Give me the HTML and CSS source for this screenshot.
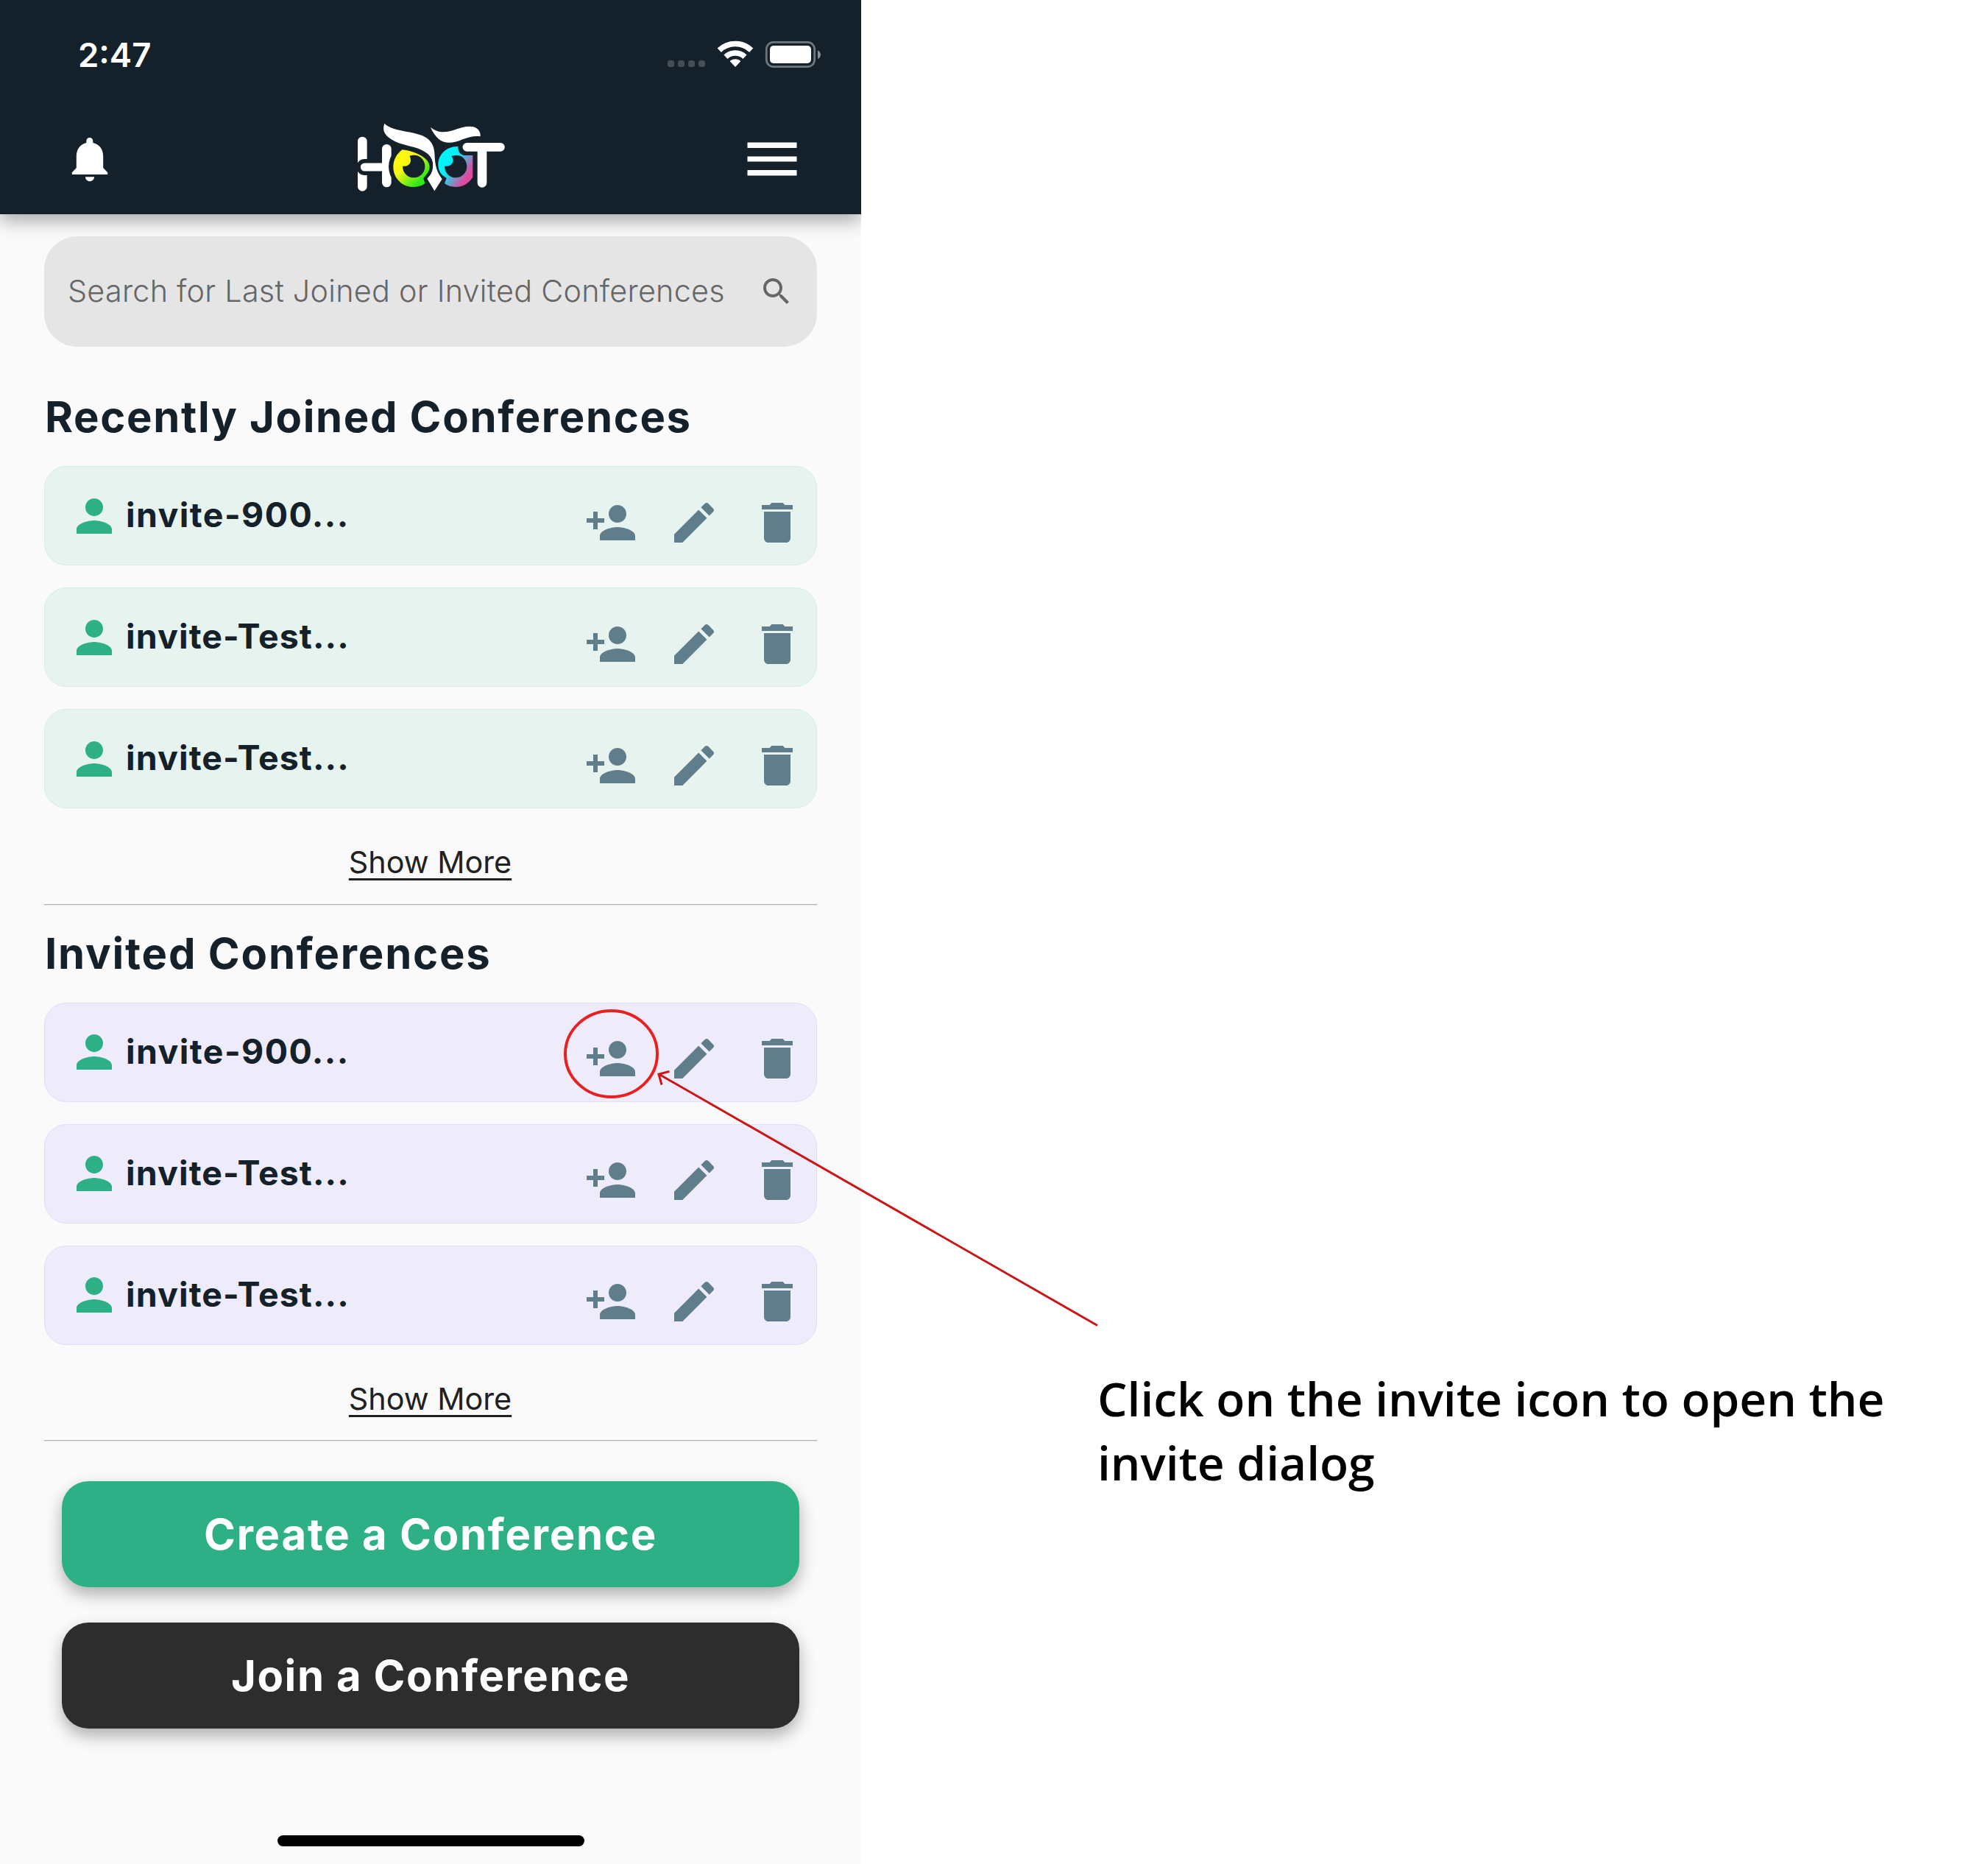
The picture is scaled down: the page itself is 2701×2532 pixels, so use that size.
FILE: index.html
```html
<!DOCTYPE html>
<html lang="en">
<head>
<meta charset="utf-8">
<title>Hoot</title>
<link rel="stylesheet" href="styles.css">
</head>
<body>
<svg class="sprite" aria-hidden="true">
  <symbol id="person" viewBox="0 0 24 24"><path d="M12 12c2.21 0 4-1.79 4-4s-1.79-4-4-4-4 1.79-4 4 1.79 4 4 4zm0 2c-2.67 0-8 1.34-8 4v2h16v-2c0-2.66-5.33-4-8-4z"/></symbol>
  <symbol id="person-add" viewBox="0 0 24 24"><path d="M15 12c2.21 0 4-1.79 4-4s-1.79-4-4-4-4 1.79-4 4 1.79 4 4 4zm-9-2V7H4v3H1v2h3v3h2v-3h3v-2H6zm9 4c-2.67 0-8 1.34-8 4v2h16v-2c0-2.66-5.33-4-8-4z"/></symbol>
  <symbol id="edit" viewBox="0 0 24 24"><path d="M3 17.25V21h3.75L17.81 9.94l-3.75-3.75L3 17.25zM20.71 7.04c.39-.39.39-1.02 0-1.41l-2.34-2.34c-.39-.39-1.02-.39-1.41 0l-1.83 1.83 3.75 3.75 1.83-1.83z"/></symbol>
  <symbol id="delete" viewBox="0 0 24 24"><path d="M6 19c0 1.1.9 2 2 2h8c1.1 0 2-.9 2-2V7H6v12zM19 4h-3.5l-1-1h-5l-1 1H5v2h14V4z"/></symbol>
</svg>

<div class="page">
  <main class="phone">
    <header class="header">
      <div class="status">
        <span class="time">2:47</span>
        <svg class="status-icons" viewBox="907 55 209 37">
          <g fill="#434e55">
            <rect x="907" y="82" width="9" height="9" rx="3"/><rect x="921" y="82" width="9" height="9" rx="3"/>
            <rect x="935" y="82" width="9" height="9" rx="3"/><rect x="949" y="82" width="9" height="9" rx="3"/>
          </g>
          <g fill="none" stroke="#fff" stroke-width="7.6">
            <path d="M977.3 68.2A31.5 31.5 0 0 1 1020.7 68.2"/>
            <path d="M986 77.2A19 19 0 0 1 1012 77.2"/>
          </g>
          <path fill="#fff" d="M999 91l-6.8-7.2c-.5-.6-.4-1 .1-1.4 4-2.9 9.4-2.9 13.4 0 .5.4.6.8.1 1.4z"/>
          <rect x="1041.3" y="57.3" width="65.4" height="33.4" rx="9.5" fill="none" stroke="#6f787d" stroke-width="2.7"/>
          <rect x="1046" y="62" width="56" height="24" rx="5" fill="#fff"/>
          <path fill="#8a9195" d="M1111 68.5c5.3 2 5.3 9.5 0 11.5z"/>
        </svg>
      </div>
      <nav class="nav">
        <svg class="bell" viewBox="97 186 50 61" fill="#fff">
          <path d="M121.8 187c2.6 0 4.5 2 4.5 4.6v2.3c9.2 2 13.9 9 13.9 18.6V228l6 6.2V237H97.8v-2.8l6-6.2v-15.5c0-9.6 4.7-16.6 13.5-18.6v-2.3c0-2.6 1.9-4.6 4.5-4.6z"/>
          <path d="M116 240.2h12c0 3.5-2.7 6-6 6s-6-2.5-6-6z"/>
        </svg>
        <svg class="logo" viewBox="0 0 750 390" role="img" aria-label="Hoot">
          <defs>
            <linearGradient id="eye-left" gradientUnits="userSpaceOnUse" x1="247" y1="215" x2="325" y2="295"><stop offset="0" stop-color="#fff80f"/><stop offset=".25" stop-color="#f4f611"/><stop offset="1" stop-color="#2fe91a"/></linearGradient>
            <linearGradient id="eye-right" gradientUnits="userSpaceOnUse" x1="430" y1="215" x2="520" y2="275"><stop offset="0" stop-color="#00f3f8"/><stop offset=".25" stop-color="#0be9f2"/><stop offset="1" stop-color="#e0489f"/></linearGradient>
          </defs>
          <g stroke-linecap="round" stroke-width="38">
            <path stroke="#fff" d="M97 126V310"/>
            <path stroke="#15212a" stroke-width="66" d="M106 231H150"/>
            <path stroke="#fff" stroke-width="33" d="M106 231H190"/>
            <path stroke="#fff" d="M196 157V294"/>
          </g>
          <circle cx="297" cy="229" r="93" fill="#15212a"/>
          <path fill="url(#eye-left)" d="M260 160C310 166 371 192 371 230C371 250 357 262 346 277L352 298C338 308 322 312 305 312C258 312 223 275 223 230C223 200 238 176 260 160Z"/>
          <path fill="#15212a" d="M289 185C328 174 352 200 352 228C352 255 332 274 307 274C282 274 261 255 261 227C280 230 294 219 294 204C294 196 292 190 289 185Z"/>
          <path fill="url(#eye-right)" d="M487 147C486 168 497 183 515 183L547 183L547 272C530 298 505 312 477 312C460 312 445 307 432 298L440 276C415 262 406 245 406 220C406 180 440 145 487 147Z"/>
          <path fill="#15212a" d="M460 187C499 172 523 200 523 228C523 255 502 274 478 274C453 274 432 255 432 227C452 230 467 218 467 204C467 197 464 191 460 187Z"/>
          <path fill="#fff" d="M187 53C220 86 290 82 340 102C382 120 392 150 392 190C394 225 400 250 422 280L391 328L361 278C380 258 386 245 384 212C378 180 350 165 318 153C285 143 245 138 215 118C185 100 178 78 187 53Z"/>
          <path fill="#fff" d="M375 68C400 90 430 92 465 82C500 68 530 62 550 67C572 75 579 88 578 106C555 102 530 109 505 118C470 135 430 138 406 115C395 103 382 88 375 68Z"/>
          <path fill="none" stroke="#fff" stroke-linecap="round" stroke-width="35" d="M523 149.5H660"/>
          <path fill="none" stroke="#fff" stroke-linecap="round" stroke-width="38" d="M585 160V295"/>
        </svg>
        <svg class="menu" viewBox="0 0 68 46" fill="#fff"><path d="M.5.5h67V8H.5zM.5 19.400h67v7.200H.5zM.5 38h67v7.500H.5z"/></svg>
      </nav>
    </header>

    <div class="content">
      <div class="search">
        <span class="placeholder">Search for Last Joined or Invited Conferences</span>
        <svg class="search-icon" viewBox="0 0 24 24"><path d="M15.5 14h-.79l-.28-.27C15.41 12.59 16 11.11 16 9.5 16 5.91 13.09 3 9.5 3S3 5.91 3 9.5 5.91 16 9.5 16c1.61 0 3.09-.59 4.23-1.57l.27.28v.79l5 4.99L20.49 19l-4.99-5zm-6 0C7.01 14 5 11.99 5 9.5S7.01 5 9.5 5 14 7.01 14 9.5 11.99 14 9.5 14z"/></svg>
      </div>

      <section class="section">
        <h2>Recently Joined Conferences</h2>
        <ul class="list">
          <li class="card"><svg class="icon user"><use href="#person"/></svg><span class="name">invite-900...</span><svg class="icon invite"><use href="#person-add"/></svg><svg class="icon"><use href="#edit"/></svg><svg class="icon"><use href="#delete"/></svg></li>
          <li class="card"><svg class="icon user"><use href="#person"/></svg><span class="name">invite-Test...</span><svg class="icon invite"><use href="#person-add"/></svg><svg class="icon"><use href="#edit"/></svg><svg class="icon"><use href="#delete"/></svg></li>
          <li class="card"><svg class="icon user"><use href="#person"/></svg><span class="name">invite-Test...</span><svg class="icon invite"><use href="#person-add"/></svg><svg class="icon"><use href="#edit"/></svg><svg class="icon"><use href="#delete"/></svg></li>
        </ul>
        <a class="more">Show More</a>
      </section>

      <section class="section invited">
        <h2>Invited Conferences</h2>
        <ul class="list">
          <li class="card"><svg class="icon user"><use href="#person"/></svg><span class="name">invite-900...</span><svg class="icon invite"><use href="#person-add"/></svg><svg class="icon"><use href="#edit"/></svg><svg class="icon"><use href="#delete"/></svg></li>
          <li class="card"><svg class="icon user"><use href="#person"/></svg><span class="name">invite-Test...</span><svg class="icon invite"><use href="#person-add"/></svg><svg class="icon"><use href="#edit"/></svg><svg class="icon"><use href="#delete"/></svg></li>
          <li class="card"><svg class="icon user"><use href="#person"/></svg><span class="name">invite-Test...</span><svg class="icon invite"><use href="#person-add"/></svg><svg class="icon"><use href="#edit"/></svg><svg class="icon"><use href="#delete"/></svg></li>
        </ul>
        <a class="more">Show More</a>
      </section>

      <div class="buttons">
        <button class="button create">Create a Conference</button>
        <button class="button join">Join a Conference</button>
      </div>
    </div>
    <div class="home-bar"></div>
  </main>

  <aside class="note">
    <p>Click on the invite icon to open the invite dialog</p>
  </aside>

  <svg class="callout" viewBox="760 1360 740 450" fill="none" aria-hidden="true">
    <ellipse cx="830.5" cy="1431.5" rx="62.5" ry="58.5" stroke="#e82020" stroke-width="4"/>
    <path stroke="#cb1517" stroke-width="3" d="M1491 1800.500L895 1459M909.500 1455.500L895 1459L899 1473.500"/>
  </svg>
</div>
</body>
</html>
```
FILE: styles.css
```css
* { box-sizing: border-box; }

body {
  margin: 0;
  background: #fff;
  font-family: Inter, "Liberation Sans", sans-serif;
}

.sprite { display: none; }
svg { display: block; flex: none; }

.page {
  position: relative;
  display: flex;
  width: 2701px;
  height: 2532px;
  overflow: hidden;
}

/* Phone screen */
.phone {
  display: flex;
  flex-direction: column;
  flex: none;
  width: 1170px;
  height: 2532px;
  overflow: hidden;
  background: #fafafa;
}

.header {
  flex: none;
  height: 291px;
  background: #15212a;
  box-shadow: 0 10px 22px rgba(0, 0, 0, .3);
}

.status {
  display: flex;
  align-items: center;
  justify-content: space-between;
  height: 147px;
  padding: 0 54px 0 106px;
}

.time {
  margin-top: 2px;
  color: #fff;
  font-size: 45.5px;
  font-weight: 600;
  line-height: 54px;
}

.status-icons { width: 209px; height: 37px; }

.nav {
  display: grid;
  grid-template-columns: 1fr 250px 1fr;
  align-items: center;
  height: 136px;
}

.bell { width: 50px; height: 61px; margin: 3px 0 0 97px; }
.logo { width: 250px; height: 130px; }
.menu { width: 68px; height: 46px; margin: 2px 87px 0 0; justify-self: end; }

.content {
  display: flex;
  flex-direction: column;
  padding: 30px 60px 0;
}

.search {
  display: flex;
  align-items: center;
  justify-content: space-between;
  height: 150px;
  padding: 0 31px 0 32px;
  border-radius: 45px;
  background: #e5e5e5;
  color: #666;
  font-size: 41.3px;
  font-weight: 300;
  line-height: 50px;
  letter-spacing: .26px;
  white-space: nowrap;
}

.placeholder { padding-bottom: 2px; }
.search-icon { width: 48px; height: 48px; fill: #666; }

.section {
  display: flex;
  flex-direction: column;
  margin-top: 60px;
  padding-bottom: 32px;
  border-bottom: 1px solid #b2b2b2;
  box-shadow: 0 1px #e0e0e0;
}

h2 {
  margin: 0 0 32px 1px;
  color: #14212a;
  font-size: 58px;
  font-weight: 700;
  line-height: 70px;
  letter-spacing: 1.65px;
}

.list {
  display: flex;
  flex-direction: column;
  gap: 30px;
  margin: 0;
  padding: 0;
  list-style: none;
}

.card {
  display: flex;
  align-items: flex-start;
  height: 135px;
  padding: 40px 17px 0 31px;
  border: 1px solid #d5ede4;
  border-radius: 30px;
  background: #e6f3ee;
}

.icon { width: 72px; height: 72px; fill: #607d8b; }
.icon + .icon { margin-left: 41px; }
.icon.user { margin-top: -9px; fill: #2eb086; }

.name {
  flex: 1;
  margin: -3px 0 0 7px;
  color: #14212a;
  font-size: 46.5px;
  font-weight: 700;
  line-height: 56px;
  letter-spacing: 1.1px;
}

.card:first-child .name { letter-spacing: 1.4px; }

.more {
  align-self: center;
  margin: 48px 1px 0 0;
  color: #212121;
  font-size: 41.3px;
  line-height: 50px;
  text-decoration: underline;
  text-decoration-thickness: 2.5px;
  text-underline-offset: 7px;
}

.invited { margin-top: 31px; padding-bottom: 31px; }
.invited h2 { letter-spacing: 1.8px; }
.invited .card { padding-top: 39px; border-color: #e2dcfb; background: #eeebfa; }
.invited .name { margin-top: -2px; }

.buttons {
  display: flex;
  flex-direction: column;
  gap: 48px;
  margin-top: 55px;
  padding: 0 24px;
}

.button {
  height: 144px;
  padding: 0;
  border: 0;
  border-radius: 36px;
  box-shadow: 0 10px 22px rgba(0, 0, 0, .3);
  color: #fff;
  font: 700 58px/70px Inter, "Liberation Sans", sans-serif;
  letter-spacing: 1.75px;
}

.create { background: #2eb086; }
.join { background: #2d2d2d; letter-spacing: 1.6px; }

.home-bar {
  flex: none;
  width: 417px;
  height: 15px;
  margin: auto auto 24px;
  border-radius: 8px;
  background: #000;
}

/* Annotation beside the screen */
.note {
  width: 1100px;
  margin: 1856px 0 0 321px;
}

.note p {
  margin: 0;
  color: #000;
  font: 600 64px/87px "Open Sans", "Noto Sans", sans-serif;
}

.callout {
  position: absolute;
  left: 760px;
  top: 1360px;
  width: 740px;
  height: 450px;
}
```
